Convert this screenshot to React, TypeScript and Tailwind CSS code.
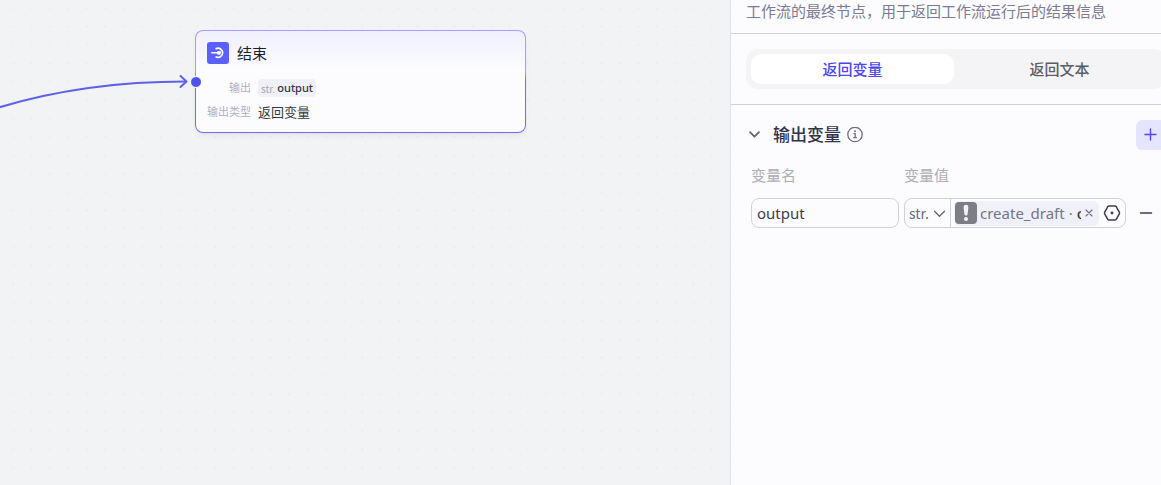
import React, { useState } from 'react';

const EndNode = () => (
  <div className="absolute left-[195px] top-[30px] w-[331px] rounded-lg bg-gradient-to-b from-[#aa9cff] from-40% to-[#7568f5] to-50% p-px shadow-md shadow-black/5">
    <div className="rounded-[7px] bg-[#fcfcff] bg-gradient-to-b from-[#f0effd] to-[#fcfcff] to-40% px-[11px] pt-[11px] pb-2">
      <div className="flex items-center gap-2">
        <svg width="22" height="22" viewBox="0 0 22 22" fill="none">
          <rect width="22" height="22" rx="3" fill="#5b5ffb" />
          <path d="M9.2 6.6A4.6 4.6 0 1 1 9.2 15" stroke="white" strokeWidth="1.7" strokeLinecap="round" />
          <path d="M4.8 10.8H12" stroke="white" strokeWidth="1.5" strokeLinecap="round" />
          <circle cx="12" cy="10.8" r="2.1" fill="white" />
        </svg>
        <h2 className="text-[15px] leading-[22px] text-[#1e1e28]">结束</h2>
      </div>
      <dl className="mt-3 grid grid-cols-[44px_1fr] items-center gap-x-[7px] text-[11px]">
        <dt className="text-right leading-6 text-[#b0b0be]">输出</dt>
        <dd className="flex">
          <span className="flex h-[18px] items-center gap-0.5 rounded bg-[#f0f0f7] px-[3px]">
            <span className="font-['Noto_Sans_CJK_SC',sans-serif] text-[10px] text-[#a2a2b4]">str.</span>
            <span className="font-medium text-[#333342]">output</span>
          </span>
        </dd>
        <dt className="text-right leading-6 text-[#b0b0be]">输出类型</dt>
        <dd className="text-[13px] leading-6 text-[#38383f]">返回变量</dd>
      </dl>
    </div>
    <span className="absolute top-[46px] -left-[5px] size-3 rounded-full border border-white bg-[#4d53e8]" />
  </div>
);

const Canvas = () => (
  <main className="relative min-w-0 flex-1 overflow-hidden bg-[#f1f3f5]">
    <svg className="absolute inset-0 h-full w-full" fill="none">
      <defs>
        <pattern id="dots" x="4.1" y="-0.9" width="18.38" height="18.38" patternUnits="userSpaceOnUse">
          <circle cx="9.2" cy="9.2" r="1" fill="#e8eaed" />
        </pattern>
      </defs>
      <rect width="100%" height="100%" fill="url(#dots)" />
      <path d="M-1 107.4C60 89 120 81.5 186 81.5" stroke="#5d61e8" strokeWidth="2" />
      <path d="M180.5 76L186.5 81.5L180.5 87" stroke="#5d61e8" strokeWidth="2" strokeLinecap="round" strokeLinejoin="round" />
    </svg>
    <EndNode />
  </main>
);

const Tabs = ({ mode, setMode }: any) => (
  <div className="grid grid-cols-2 gap-1 rounded-xl bg-[#f4f4f6] p-[5px]">
    {['返回变量', '返回文本'].map((name) => (
      <button
        key={name}
        type="button"
        onClick={() => setMode(name)}
        className={
          mode === name
            ? 'h-[30px] rounded-[10px] bg-white text-[15px] font-medium text-[#4d45f0]'
            : 'h-[30px] rounded-[10px] text-[15px] font-medium text-[#5c5c68]'
        }
      >
        {name}
      </button>
    ))}
  </div>
);

const ValuePicker = () => (
  <div className="flex h-[30px] w-[222px] items-center rounded-lg border border-[#cfcfe2]">
    <div className="relative flex h-full w-[46px] items-center border-r border-[#cfcfe2]">
      <select
        aria-label="变量类型"
        className="h-full w-full appearance-none bg-transparent pl-1 font-['Noto_Sans_CJK_SC',sans-serif] text-[14px] text-[#6c6c80] outline-none"
      >
        <option>str.</option>
      </select>
      <svg className="pointer-events-none absolute right-1 top-[11px]" width="13" height="8" viewBox="0 0 13 8" fill="none">
        <path d="M1.5 1.2L6.5 6.2L11.5 1.2" stroke="#62627a" strokeWidth="1.3" strokeLinecap="round" strokeLinejoin="round" />
      </svg>
    </div>
    <div className="ml-[3px] flex h-[25px] w-[145px] items-center rounded-md bg-[#f0f0f8]">
      <svg className="ml-px shrink-0" width="22" height="22" viewBox="0 0 22 22">
        <rect width="22" height="22" rx="4" fill="#7d7d87" />
        <path d="M8.6 5.2a2.4 2.4 0 0 1 4.8 0L12.6 12a1.6 1.6 0 0 1-3.2 0Z" fill="#f2f2fa" />
        <circle cx="11" cy="17" r="2" fill="#f2f2fa" />
      </svg>
      <span className="ml-[3px] flex w-[101px] gap-1 overflow-hidden text-[15px] leading-6 whitespace-nowrap text-[#74748c]">
        <span>create_draft</span>
        <span>·</span>
        <span className="font-medium text-[#38384a]">output</span>
      </span>
      <button type="button" aria-label="清除" className="flex w-4 justify-center">
        <svg width="8" height="8" viewBox="0 0 8 8">
          <path d="M1 1L7 7M7 1L1 7" stroke="#6c6c80" strokeWidth="1.1" strokeLinecap="round" />
        </svg>
      </button>
    </div>
    <button type="button" aria-label="设置" className="flex flex-1 justify-center">
      <svg width="18" height="18" viewBox="0 0 18 18" fill="none">
        <path
          d="M6 2H12Q12.8 2 13.2 2.7L16.3 8.2Q16.7 9 16.3 9.8L13.2 15.3Q12.8 16 12 16H6Q5.2 16 4.8 15.3L1.7 9.8Q1.3 9 1.7 8.2L4.8 2.7Q5.2 2 6 2Z"
          stroke="#3c3c4c"
          strokeWidth="1.5"
        />
        <circle cx="9" cy="9" r="1.4" fill="#3c3c4c" />
      </svg>
    </button>
  </div>
);

const SidePanel = () => {
  const [mode, setMode] = useState('返回变量');
  const [name, setName] = useState('output');

  return (
    <aside className="w-[431px] shrink-0 overflow-hidden border-l border-[#dfdfeb] bg-[#fcfcff]">
      <div className="w-[435px]">
        <p className="h-[34px] border-b border-[#cfcfe2] pl-[15px] text-[15px] leading-[23px] text-[#7b7b93]">
          工作流的最终节点，用于返回工作流运行后的结果信息
        </p>
        <div className="border-b border-[#cfcfe2] py-[15px] pl-[15px]">
          <Tabs mode={mode} setMode={setMode} />
        </div>
        <section className="pt-[15px] pl-[15px]">
          <div className="flex h-[30px] items-center">
            <svg className="ml-0.5" width="14" height="14" viewBox="0 0 14 14" fill="none">
              <path d="M2 4.2L6.5 8.7L11 4.2" stroke="#66667c" strokeWidth="1.8" strokeLinecap="round" strokeLinejoin="round" />
            </svg>
            <h3 className="ml-[11px] text-[17px] leading-[28px] font-medium text-[#32324a]">输出变量</h3>
            <svg className="ml-1.5" width="16" height="16" viewBox="0 0 16 16" fill="none">
              <circle cx="8" cy="7.5" r="7.2" stroke="#6e6e84" strokeWidth="1.3" />
              <circle cx="8" cy="4.3" r="1" fill="#6e6e84" />
              <path d="M6.4 6.6H8.2V10.6M6.2 10.7H10" stroke="#6e6e84" strokeWidth="1.3" />
            </svg>
            <button type="button" aria-label="新增" className="ml-auto flex size-[30px] items-center justify-center rounded-md bg-[#e5e5ff]">
              <svg width="14" height="14" viewBox="0 0 14 14">
                <path d="M6.5 1V12M1 6.5H12" stroke="#5147ff" strokeWidth="1.4" strokeLinecap="round" />
              </svg>
            </button>
          </div>
          <div className="mt-[14px] grid grid-cols-[148px_222px_1fr] gap-x-[5px] gap-y-[11px] pl-[5px]">
            <label htmlFor="var-name" className="text-[15px] leading-[23px] text-[#adadb5]">变量名</label>
            <span className="col-span-2 text-[15px] leading-[23px] text-[#adadb5]">变量值</span>
            <input
              id="var-name"
              type="text"
              value={name}
              onChange={(e) => setName(e.target.value)}
              className="h-[30px] w-full rounded-lg border border-[#cfcfe2] bg-transparent px-[5px] text-[15px] text-[#3c3c50] outline-none"
            />
            <ValuePicker />
            <button type="button" aria-label="删除" className="ml-2 flex w-[14px] items-center justify-center">
              <svg width="14" height="4" viewBox="0 0 14 4">
                <path d="M1.5 2H12.5" stroke="#3c3c4c" strokeWidth="1.5" strokeLinecap="round" />
              </svg>
            </button>
          </div>
        </section>
      </div>
    </aside>
  );
};

const App = () => (
  <div className="flex min-h-screen font-['Noto_Sans','Noto_Sans_CJK_SC',sans-serif]">
    <Canvas />
    <SidePanel />
  </div>
);

export default App;
